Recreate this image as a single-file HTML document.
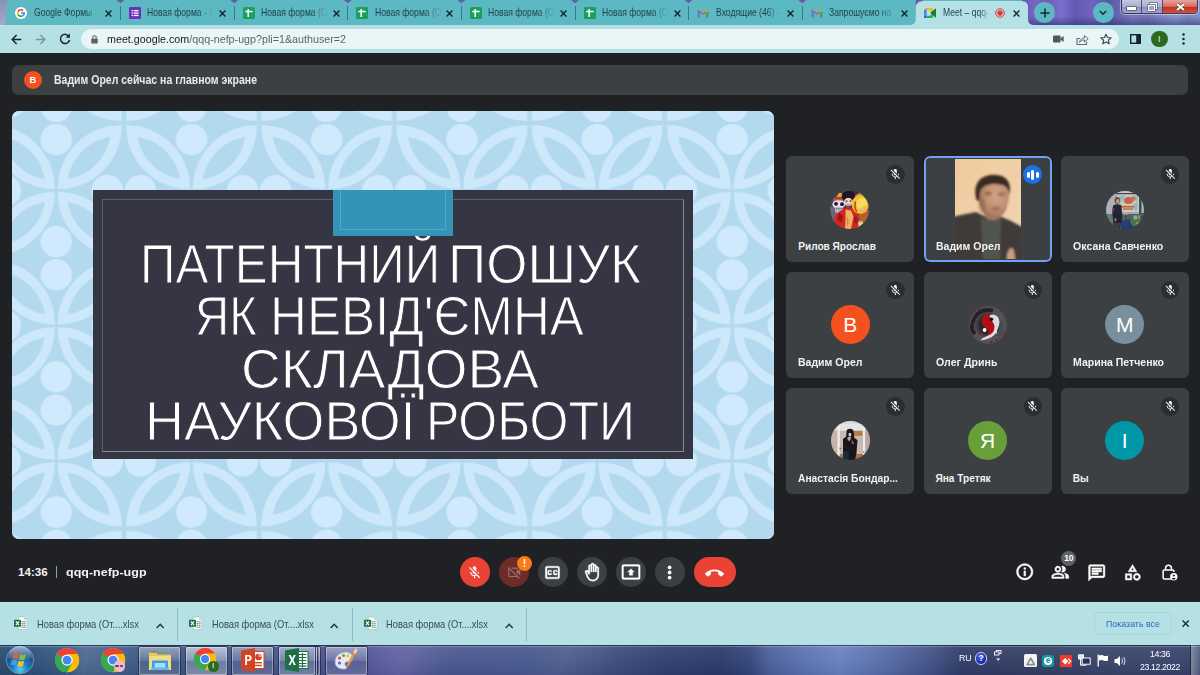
<!DOCTYPE html>
<html lang="ru">
<head>
<meta charset="utf-8">
<title>Meet – qqq-nefp-ugp</title>
<style>
*{box-sizing:border-box;margin:0;padding:0}
html,body{width:1200px;height:675px;overflow:hidden;background:#202124}
body{position:relative;font-family:"Liberation Sans",sans-serif;color:#e8eaed}
.abs{position:absolute}
svg{display:block;overflow:visible}
/* ---------- browser chrome ---------- */
#tabstrip{position:absolute;left:0;top:0;width:1200px;height:25px;background:#5cb8c2;overflow:hidden}
#frameL{position:absolute;left:0;top:0;width:8px;height:25px;background:linear-gradient(180deg,#8492b4,#9a9cc2 55%,#aaa8cc)}
#frameR{position:absolute;left:1022px;top:0;width:178px;height:25px;background:linear-gradient(180deg,rgba(40,40,100,0) 65%,rgba(40,40,100,.5) 100%),linear-gradient(90deg,#6658b4 0,#7668c4 8%,#6a5cb8 14%,#7a70cc 22%,#6458b0 30%,#7064bc 40%,#5a58a4 48%,#6a68b4 55%,#7878bc 62%,#6c74b4 70%,#8088c4 78%,#8c98cc 86%,#7c88c0 93%,#8890c8 100%)}
.tab{position:absolute;top:0;height:25px;width:114px}
.tab .ttl{position:absolute;left:27px;top:5.5px;font-size:10.6px;line-height:13px;color:#1d3f4a;white-space:nowrap;width:81.500px;overflow:hidden;transform:scaleX(.811);transform-origin:0 0;
 -webkit-mask-image:linear-gradient(90deg,#000 75%,transparent 100%);mask-image:linear-gradient(90deg,#000 75%,transparent 100%)}
.tab .fav{position:absolute;left:8.5px;top:6.9px;width:12px;height:12px}
.tab .cls{position:absolute;left:98.5px;top:9.5px;width:7px;height:7px}
.tab .sep{position:absolute;left:-0.5px;top:6px;width:1px;height:14px;background:#2f7f8a}
#toolbar{position:absolute;left:0;top:25px;width:1200px;height:28px;background:#b5e1e5}
#omni{position:absolute;left:81px;top:3.7px;width:1038px;height:20.6px;border-radius:10.3px;background:#e9f5f7}
#url{position:absolute;left:106.7px;top:6.3px;font-size:11.6px;line-height:15px;color:#202124;white-space:nowrap;transform:scaleX(.925);transform-origin:0 0}
#url span{color:#5f6368}
/* ---------- meet ---------- */
#meet{position:absolute;left:0;top:53px;width:1200px;height:549px;background:#202124}
#banner{position:absolute;left:12px;top:65.2px;width:1176px;height:29.8px;border-radius:7px;background:#3c4043}
#banner .av{position:absolute;left:11.8px;top:5.9px;width:18.2px;height:18.2px;border-radius:50%;background:#f4511e;color:#fff;font-size:9.5px;line-height:18.2px;text-align:center;font-weight:bold}
#banner .tx{position:absolute;left:42.4px;top:7.700px;transform:scaleX(.883);transform-origin:0 0;font-size:11.9px;line-height:14px;font-weight:bold;color:#e8eaed;white-space:nowrap}
#slide{position:absolute;left:12px;top:111px;width:762px;height:428px;border-radius:7px;overflow:hidden;background:#b3d9ef}
#box{position:absolute;left:81.2px;top:78.9px;width:599.7px;height:269.6px;background:#363543}
#boxin{position:absolute;left:90.4px;top:88.4px;width:582.1px;height:252.2px;border:1px solid;border-color:rgba(105,116,134,.7) rgba(140,148,163,.9) rgba(140,148,163,.9) rgba(105,116,134,.7)}
#accent{position:absolute;left:321.1px;top:78.8px;width:120px;height:45.8px;background:#3494b8}
#accent i{position:absolute;left:6.9px;top:0;width:106px;height:40px;border:1px solid rgba(130,200,225,.4);border-top:none}
.hl{position:absolute;white-space:nowrap;color:#fff;font-size:56px;line-height:60px;transform-origin:0 0;-webkit-text-stroke:1px #363543}
/* tiles */
.tile{position:absolute;width:128px;height:106.2px;border-radius:6px;background:#3c4043;overflow:hidden}
.tile .nm{position:absolute;left:12px;top:83.7px;font-size:10.1px;line-height:13px;font-weight:bold;color:#f1f3f4;white-space:nowrap}
.tile .mic{position:absolute;left:100px;top:9.1px;width:18.4px;height:18.4px;border-radius:50%;background:#2b2d30}
.tile .avt{position:absolute;left:44.5px;top:33.3px;width:39px;height:39px;border-radius:50%;overflow:hidden;color:#fff;text-align:center;font-size:21px;line-height:39px}
/* bottom bar */
.cbtn{position:absolute;top:557px;width:30px;height:30px;border-radius:50%;background:#3c4043}
/* downloads */
#dl{position:absolute;left:0;top:602px;width:1200px;height:43px;background:#b5e1e5}
.dli{position:absolute;top:0;height:43.5px;width:175px}
.dli .t{position:absolute;left:36.9px;top:15.5px;font-size:10.2px;line-height:13px;color:#3a4d54;white-space:nowrap;transform:scaleX(.916);transform-origin:0 0}
.dli .sp{position:absolute;left:177px;top:6.2px;width:1px;height:32.5px;background:#8fb9be}
/* taskbar */
#task{position:absolute;left:0;top:644.8px;width:1200px;height:30.2px;overflow:hidden;
 background:linear-gradient(90deg,#2a4a6e 0%,#2f5078 3%,#385a84 5.500%,#4d6a90 7%,#42618a 9.500%,#3a5682 12%,#3c5484 16%,#46548c 24%,#4c5290 30%,#56589c 33%,#4a5690 37%,#48588e 44%,#40507f 50%,#30406f 55%,#2a3a68 60%,#34447a 62.500%,#4a5e98 64%,#5a72b0 67%,#6880c0 70%,#5a70ac 73%,#46568c 77%,#303c68 80%,#333e62 86%,#384468 93%,#36426a 100%)}
#task:before{content:"";position:absolute;left:0;top:0;width:100%;height:100%;background:linear-gradient(180deg,rgba(20,30,60,.6) 0,rgba(20,30,60,.6) .8px,rgba(255,255,255,.3) 1px,rgba(255,255,255,.3) 1.8px,rgba(255,255,255,.07) 2.2px,rgba(255,255,255,.03) 50%,rgba(0,0,30,.06) 100%),linear-gradient(115deg,rgba(255,255,255,0) 30%,rgba(255,255,255,.07) 34%,rgba(255,255,255,0) 38%,rgba(255,255,255,0) 44%,rgba(255,255,255,.06) 47%,rgba(255,255,255,0) 51%)}
.tbtn{position:absolute;top:1px;height:30px;border:1px solid rgba(20,30,60,.75);border-radius:2px;background:linear-gradient(180deg,rgba(255,255,255,.42),rgba(255,255,255,.18) 48%,rgba(255,255,255,.06) 52%,rgba(255,255,255,.16));box-shadow:inset 0 0 0 1px rgba(255,255,255,.35)}
</style>
</head>
<body>
<div id="tabstrip">
 <div id="frameL"></div>
 <div id="frameR"></div>
 <!-- first tab rounded start -->
 <div class="abs" style="left:6px;top:0;width:12px;height:25px;background:#5cb8c2;border-top-left-radius:5px"></div><svg class="abs" style="left:0;top:0" width="8" height="25"><path d="M6.200 19.500V25H1.800Q6.200 25 6.200 19.500z" fill="#5cb8c2"/></svg>
 <!-- purple notches between tabs -->
 <svg class="abs" style="left:0;top:0" width="1200" height="25">
  <g fill="#6a5aa8">
   <path d="M116.4 0h8l-4 3.2z"/><path d="M230.2 0h8l-4 3.2z"/><path d="M343.8 0h8l-4 3.2z"/><path d="M457.4 0h8l-4 3.2z"/>
   <path d="M571 0h8l-4 3.2z"/><path d="M684.6 0h8l-4 3.2z"/><path d="M798.2 0h8l-4 3.2z"/>
  </g>
  <!-- active tab shape -->
  <path d="M909 25 Q915.8 25 915.8 19 V7.5 Q915.8 1 922.3 1 H1021.5 Q1028 1 1028 7.5 V19 Q1028 25 1034.5 25 Z" fill="#b5e1e5"/>
  <path d="M909 0 h14 v1 Q915.8 1 915.8 8 V0z" fill="#6a5aa8"/>
 </svg>
 <div class="tab" style="left:6.5px">
  <svg class="fav" viewBox="0 0 24 24"><circle cx="12" cy="12" r="12" fill="#fff"/>
   <path d="M12 10.4v3.3h4.6c-.2 1.1-.8 1.9-1.7 2.5l2.6 2c1.6-1.4 2.5-3.600 2.500-6.100 0-.6-.1-1.200-.2-1.700z" fill="#4285f4"/>
   <path d="M7.500 13.700l-.6.400-2.100 1.700C6.200 18.500 8.900 20.200 12 20.200c2.200 0 4-.7 5.400-2l-2.600-2c-.7.500-1.600.800-2.800.800-2.100 0-3.900-1.400-4.500-3.300z" fill="#34a853"/>
   <path d="M4.800 8.200C4.200 9.300 3.900 10.600 3.900 12s.300 2.700.9 3.800c0 0 2.700-2.100 2.700-2.100-.2-.5-.3-1.100-.3-1.700s.100-1.200.3-1.700z" fill="#fbbc05"/>
   <path d="M12 7.100c1.200 0 2.300.4 3.100 1.200l2.300-2.300C16 4.700 14.200 3.900 12 3.900c-3.100 0-5.800 1.800-7.200 4.400l2.700 2.100C8.100 8.500 9.900 7.100 12 7.100z" fill="#ea4335"/></svg>
  <div class="ttl">Google Формы - Google</div>
  <svg class="cls" viewBox="0 0 7 7"><path d="M.6.6l5.800 5.800M6.400.6L.6 6.400" stroke="#10262c" stroke-width="1.35" fill="none"/></svg>
 </div>
 <div class="tab" style="left:120.4px"><i class="sep"></i>
  <svg class="fav" viewBox="0 0 12 12"><rect width="12" height="12" rx="1.2" fill="#6b32b8"/><g fill="#fff"><rect x="2.600" y="3" width="1.300" height="1.300"/><rect x="4.700" y="3" width="4.800" height="1.300"/><rect x="2.600" y="5.400" width="1.300" height="1.300"/><rect x="4.700" y="5.400" width="4.800" height="1.300"/><rect x="2.600" y="7.800" width="1.300" height="1.300"/><rect x="4.700" y="7.800" width="4.800" height="1.300"/></g></svg>
  <div class="ttl">Новая форма - Google</div>
  <svg class="cls" viewBox="0 0 7 7"><path d="M.6.6l5.800 5.800M6.400.6L.6 6.400" stroke="#10262c" stroke-width="1.35" fill="none"/></svg>
 </div>
 <div class="tab" style="left:234.2px"><i class="sep"></i>
  <svg class="fav" viewBox="0 0 12 12"><rect width="12" height="12" rx="1.500" fill="#17a15a"/><path d="M2.300 4.600h7.400M5.200 2v8" stroke="#fff" stroke-width="1.500" fill="none"/></svg>
  <div class="ttl">Новая форма (Ответы)</div>
  <svg class="cls" viewBox="0 0 7 7"><path d="M.6.6l5.800 5.800M6.400.6L.6 6.400" stroke="#10262c" stroke-width="1.35" fill="none"/></svg>
 </div>
 <div class="tab" style="left:347.8px"><i class="sep"></i>
  <svg class="fav" viewBox="0 0 12 12"><rect width="12" height="12" rx="1.500" fill="#17a15a"/><path d="M2.300 4.600h7.400M5.200 2v8" stroke="#fff" stroke-width="1.500" fill="none"/></svg>
  <div class="ttl">Новая форма (Ответы)</div>
  <svg class="cls" viewBox="0 0 7 7"><path d="M.6.6l5.800 5.800M6.400.6L.6 6.400" stroke="#10262c" stroke-width="1.35" fill="none"/></svg>
 </div>
 <div class="tab" style="left:461.4px"><i class="sep"></i>
  <svg class="fav" viewBox="0 0 12 12"><rect width="12" height="12" rx="1.500" fill="#17a15a"/><path d="M2.300 4.600h7.400M5.200 2v8" stroke="#fff" stroke-width="1.500" fill="none"/></svg>
  <div class="ttl">Новая форма (Ответы)</div>
  <svg class="cls" viewBox="0 0 7 7"><path d="M.6.6l5.800 5.800M6.400.6L.6 6.400" stroke="#10262c" stroke-width="1.35" fill="none"/></svg>
 </div>
 <div class="tab" style="left:575px"><i class="sep"></i>
  <svg class="fav" viewBox="0 0 12 12"><rect width="12" height="12" rx="1.500" fill="#17a15a"/><path d="M2.300 4.600h7.400M5.200 2v8" stroke="#fff" stroke-width="1.500" fill="none"/></svg>
  <div class="ttl">Новая форма (Ответы)</div>
  <svg class="cls" viewBox="0 0 7 7"><path d="M.6.6l5.800 5.800M6.400.6L.6 6.400" stroke="#10262c" stroke-width="1.35" fill="none"/></svg>
 </div>
 <div class="tab" style="left:688.6px"><i class="sep"></i>
  <svg class="fav" viewBox="0 0 12 12"><path d="M.8 2.600v7.600h2.200V5.500L6 7.800l3-2.300v4.700h2.200V2.600L6 6.400z" fill="#ea4335"/><path d="M.8 10.200h2.200V5.500L.8 3.800z" fill="#4285f4"/><path d="M11.200 10.200H9V5.500l2.200-1.700z" fill="#34a853"/><path d="M9 5.500l2.200-1.700V2.600L9 3.900z" fill="#fbbc05"/></svg>
  <div class="ttl">Входящие (46) -</div>
  <svg class="cls" viewBox="0 0 7 7"><path d="M.6.6l5.800 5.800M6.400.6L.6 6.400" stroke="#10262c" stroke-width="1.35" fill="none"/></svg>
 </div>
 <div class="tab" style="left:802.2px"><i class="sep"></i>
  <svg class="fav" viewBox="0 0 12 12"><path d="M.8 2.600v7.600h2.200V5.500L6 7.800l3-2.300v4.700h2.200V2.600L6 6.400z" fill="#ea4335"/><path d="M.8 10.200h2.200V5.500L.8 3.800z" fill="#4285f4"/><path d="M11.200 10.200H9V5.500l2.200-1.700z" fill="#34a853"/><path d="M9 5.500l2.200-1.700V2.600L9 3.900z" fill="#fbbc05"/></svg>
  <div class="ttl">Запрошуємо на</div>
  <svg class="cls" viewBox="0 0 7 7"><path d="M.6.6l5.800 5.800M6.400.6L.6 6.400" stroke="#10262c" stroke-width="1.35" fill="none"/></svg>
 </div>
 <div class="tab" style="left:915.8px">
  <svg class="fav" viewBox="0 0 12 12"><path d="M0 3.200L2.700.9v2.300z" fill="#ea4335"/><path d="M2.700.9H8q.9 0 .9.900v1.900L6.800 5.200V3.200H2.700z" fill="#fbbc05"/><path d="M0 3.200h2.700v5.600H0z" fill="#4285f4"/><path d="M0 8.800h2.700v2.300H.9q-.9 0-.9-.9z" fill="#1967d2"/><path d="M2.700 8.800h4.100V6.800l2.100 1.700v1.700q0 .9-.9.900H2.700z" fill="#34a853"/><path d="M6.800 5.200L11.300 1.700q.7-.4.700.4v7.800q0 .8-.7.400L6.800 6.800z" fill="#188038"/></svg>
  <div class="ttl" style="width:59px">Meet – qqq-</div>
  <svg class="abs" style="left:78.8px;top:8px" width="10" height="10" viewBox="0 0 10 10"><circle cx="5" cy="5" r="4.300" fill="none" stroke="#e53935" stroke-width="1"/><circle cx="5" cy="5" r="2.700" fill="#e53935"/></svg>
  <svg class="cls" style="left:97px" viewBox="0 0 7 7"><path d="M.6.6l5.800 5.800M6.400.6L.6 6.400" stroke="#10262c" stroke-width="1.35" fill="none"/></svg>
 </div>
 <!-- new tab + tab search -->
 <div class="abs" style="left:1034.2px;top:2.4px;width:20.600px;height:20.600px;border-radius:50%;background:#5cb8c2"></div>
 <svg class="abs" style="left:1039.500px;top:7.700px" width="10" height="10" viewBox="0 0 10 10"><path d="M5 .5v9M.5 5h9" stroke="#0f2a30" stroke-width="1.500"/></svg>
 <div class="abs" style="left:1093.100px;top:2.4px;width:20.600px;height:20.600px;border-radius:50%;background:#5cb8c2"></div>
 <svg class="abs" style="left:1099.400px;top:9.500px" width="8" height="6" viewBox="0 0 8 6"><path d="M.8 1l3.200 3.200L7.200 1" stroke="#0f2a30" stroke-width="1.400" fill="none"/></svg>
 <!-- window controls -->
 <div class="abs" style="left:1120.800px;top:-1px;width:77px;height:14.500px;border:1px solid rgba(40,40,70,.8);border-radius:0 0 4px 4px;overflow:hidden;box-shadow:0 0 0 1px rgba(255,255,255,.45)">
  <div class="abs" style="left:0;top:0;width:20px;height:14px;background:linear-gradient(180deg,#c5c6e0,#a9abd2 50%,#8d90c0 52%,#a6a8d4);border-right:1px solid rgba(40,40,70,.7)"></div>
  <div class="abs" style="left:20px;top:0;width:21px;height:14px;background:linear-gradient(180deg,#c5c6e0,#a9abd2 50%,#8d90c0 52%,#a6a8d4);border-right:1px solid rgba(40,40,70,.7)"></div>
  <div class="abs" style="left:41px;top:0;width:36px;height:14px;background:linear-gradient(180deg,#e8a59b,#d9675a 48%,#c2301f 52%,#d8563e)"></div>
  <div class="abs" style="left:5.500px;top:7px;width:9px;height:3px;background:#fff;box-shadow:0 0 0 .6px #444"></div>
  <div class="abs" style="left:28.500px;top:2.500px;width:7px;height:6px;border:1.300px solid #fff;box-shadow:0 0 0 .6px #555"></div>
  <div class="abs" style="left:26px;top:4.700px;width:7px;height:6px;border:1.300px solid #fff;background:#9fa2cc;box-shadow:0 0 0 .6px #555"></div>
  <svg class="abs" style="left:54px;top:2.800px" width="9" height="8" viewBox="0 0 9 8"><path d="M1 1l7 6M8 1L1 7" stroke="#444" stroke-width="3"/><path d="M1 1l7 6M8 1L1 7" stroke="#fff" stroke-width="1.900"/></svg>
 </div>
</div>

<div id="toolbar">
 <div id="omni"></div>
 <!-- back / forward / reload -->
 <svg class="abs" style="left:10.800px;top:8.500px" width="11" height="11" viewBox="0 0 11 11"><path d="M10.300 5.500H1.600M5.600 1L1.200 5.500l4.400 4.500" stroke="#16282d" stroke-width="1.500" fill="none"/></svg>
 <svg class="abs" style="left:34.800px;top:8.500px" width="11" height="11" viewBox="0 0 11 11"><path d="M.7 5.500h8.700M5.400 1l4.400 4.500L5.400 10" stroke="#7b979d" stroke-width="1.500" fill="none"/></svg>
 <svg class="abs" style="left:58.700px;top:7.700px" width="12" height="12" viewBox="0 0 12 12"><path d="M10 3.500A4.600 4.600 0 1 0 10.600 7" stroke="#16282d" stroke-width="1.500" fill="none"/><path d="M10.900.6v4.200H6.700z" fill="#16282d"/></svg>
 <!-- lock -->
 <svg class="abs" style="left:90.900px;top:9.800px" width="7" height="8.750" viewBox="0 0 8 10"><rect x=".3" y="4" width="7.400" height="5.700" rx=".8" fill="#5f6368"/><path d="M2 4V2.800a2 2 0 0 1 4 0V4" stroke="#5f6368" stroke-width="1.200" fill="none"/></svg>
 <div id="url">meet.google.com<span>/qqq-nefp-ugp?pli=1&amp;authuser=2</span></div>
 <!-- camera, share, star -->
 <svg class="abs" style="left:1052.500px;top:10px" width="11" height="8" viewBox="0 0 11 8"><rect x="0" y=".5" width="7.600" height="7" rx="1" fill="#50585c"/><path d="M7.600 3.200L10.600 1v6L7.600 4.800z" fill="#50585c"/></svg>
 <svg class="abs" style="left:1076px;top:8.500px" width="13" height="11" viewBox="0 0 13 11"><path d="M4 4.500H1v6h9.500V8" stroke="#5f6b70" stroke-width="1.100" fill="none"/><path d="M3.500 8.500C4 5.500 6 4 8.500 3.800V1.500l3.700 3.300-3.700 3.300V5.900C6.500 5.900 4.800 6.600 3.500 8.500z" stroke="#5f6b70" stroke-width="1" fill="none"/></svg>
 <svg class="abs" style="left:1100px;top:8.200px" width="12" height="12" viewBox="0 0 12 12"><path d="M6 1.200l1.500 3.300 3.600.4-2.700 2.400.8 3.500L6 9l-3.200 1.800.8-3.500L.9 4.900l3.600-.4z" stroke="#39464b" stroke-width="1.150" fill="none" stroke-linejoin="round"/></svg>
 <!-- side panel, avatar, menu -->
 <svg class="abs" style="left:1130px;top:9px" width="11" height="10" viewBox="0 0 11 10"><rect x=".7" y=".7" width="9.600" height="8.600" fill="none" stroke="#14262b" stroke-width="1.400"/><rect x="6.200" y=".7" width="4.100" height="8.600" fill="#14262b"/></svg>
 <div class="abs" style="left:1151px;top:5.700px;width:16.600px;height:16.600px;border-radius:50%;background:#2b6a1c;color:#e6f2e2;font-size:9px;line-height:16.600px;text-align:center">I</div>
 <svg class="abs" style="left:1182.300px;top:8.300px" width="3" height="12" viewBox="0 0 3 12"><circle cx="1.500" cy="1.500" r="1.250" fill="#14262b"/><circle cx="1.500" cy="6" r="1.250" fill="#14262b"/><circle cx="1.500" cy="10.500" r="1.250" fill="#14262b"/></svg>
</div>

<div id="meet"></div>
<div id="banner"><div class="av">В</div><div class="tx">Вадим Орел сейчас на главном экране</div></div>
<div id="slide">
<svg class="abs" style="left:0;top:0" width="762" height="428">
 <defs><pattern id="pt" patternUnits="userSpaceOnUse" x="-23.30" y="12.00" width="135.2" height="135.2">
  <rect width="135.2" height="135.2" fill="#b3d9ef"/>
  <path d="M66.20 66.20A63.39 63.39 0 0 1 2.20 2.20A63.39 63.39 0 0 1 66.20 66.20Z M69.00 66.20A63.39 63.39 0 0 1 133.00 2.20A63.39 63.39 0 0 1 69.00 66.20Z M69.00 69.00A63.39 63.39 0 0 1 133.00 133.00A63.39 63.39 0 0 1 69.00 69.00Z M66.20 69.00A63.39 63.39 0 0 1 2.20 133.00A63.39 63.39 0 0 1 66.20 69.00Z" fill="#cde8fb"/>
  <path d="M56.20 56.20A51.19 51.19 0 0 1 13.60 13.60A51.19 51.19 0 0 1 56.20 56.20Z M79.00 56.20A51.19 51.19 0 0 1 121.60 13.60A51.19 51.19 0 0 1 79.00 56.20Z M79.00 79.00A51.19 51.19 0 0 1 121.60 121.60A51.19 51.19 0 0 1 79.00 79.00Z M56.20 79.00A51.19 51.19 0 0 1 13.60 121.60A51.19 51.19 0 0 1 56.20 79.00Z" fill="#b3d9ef"/>
  <circle cx="118.60" cy="67.60" r="15.7" fill="#d0e9fc"/><circle cx="16.60" cy="67.60" r="15.7" fill="#d0e9fc"/><circle cx="67.60" cy="118.60" r="15.7" fill="#d0e9fc"/><circle cx="67.60" cy="16.60" r="15.7" fill="#d0e9fc"/>
 </pattern></defs>
 <rect width="762" height="428" fill="url(#pt)"/>
</svg>
 <div id="box"></div><div id="boxin"></div>
 <div class="hl" style="left:127.99px;top:122.6px;transform:scaleX(0.8818)">ПАТЕНТНИЙ</div>
 <div class="hl" style="left:436.06px;top:122.6px;transform:scaleX(0.9485)">ПОШУК</div>
 <div class="hl" style="left:183.32px;top:175.2px;transform:scaleX(0.8448)">ЯК</div>
 <div class="hl" style="left:257.74px;top:175.2px;transform:scaleX(0.9124)">НЕВІД'ЄМНА</div>
 <div class="hl" style="left:229.05px;top:227.6px;transform:scaleX(0.9823)">СКЛАДОВА</div>
 <div class="hl" style="left:133.19px;top:280.0px;transform:scaleX(0.9625)">НАУКОВОЇ</div>
 <div class="hl" style="left:414.23px;top:280.0px;transform:scaleX(0.8942)">РОБОТИ</div>
 <div id="accent"><i></i></div>
</div>
<div class="tile" style="left:786.2px;top:156.2px"><div class="mic"><svg class="abs" style="left:2.9px;top:3.1px" width="12.600" height="12.600" viewBox="0 0 24 24"><path d="M19 11h-1.7c0 .74-.16 1.43-.43 2.050l1.230 1.230c.56-.98.9-2.090.9-3.280zm-4.020.17c0-.06.020-.11.020-.17V5c0-1.660-1.340-3-3-3S9 3.340 9 5v.18l5.980 5.990zM4.270 3L3 4.270l6.010 6.010V11c0 1.660 1.330 3 2.990 3 .22 0 .44-.03.65-.08l1.660 1.660c-.71.33-1.500.52-2.310.52-2.760 0-5.300-2.100-5.300-5.100H5c0 3.410 2.720 6.230 6 6.720V21h2v-3.280c.91-.13 1.770-.45 2.540-.9L19.730 21 21 19.730 4.270 3z" fill="#f1f3f4"/></svg></div><svg class="abs" style="left:44.300px;top:34.100px" width="39" height="39" viewBox="0 0 39 39"><defs><filter id="avb" x="-5%" y="-5%" width="110%" height="110%"><feGaussianBlur stdDeviation=".55"/></filter><clipPath id="c1"><circle cx="19.500" cy="19.500" r="19.500"/></clipPath></defs><g clip-path="url(#c1)"><g filter="url(#avb)">
<rect x="-3" y="-3" width="45" height="45" fill="#4e4264"/>
<ellipse cx="30" cy="6" rx="12" ry="8" fill="#c8843a"/><ellipse cx="24" cy="2" rx="5" ry="3" fill="#3a2c40"/>
<ellipse cx="34" cy="30" rx="9" ry="11" fill="#b8602c"/>
<ellipse cx="17" cy="38" rx="14" ry="5.500" fill="#e8b428"/>
<path d="M0 17h8v14l-5 3z" fill="#6e687c"/>
<ellipse cx="8.700" cy="14.200" rx="6.300" ry="4.500" fill="#e4e0e8"/><rect x="5.200" y="17" width="7.500" height="5.500" rx="1.500" fill="#cfcbd6"/>
<path d="M5.500 18.500h7M6.800 17.500v4M9 17.500v4M11.200 17.500v4" stroke="#5a4a6a" stroke-width=".5"/>
<circle cx="6" cy="13.800" r="1.900" fill="#1c1046"/><circle cx="12" cy="14.200" r="1.900" fill="#1c1046"/>
<rect x="3" y="7.300" width="9.500" height="2.600" rx=".6" fill="#c8343a"/><rect x="3" y="9.600" width="9.500" height=".9" fill="#b89048"/><path d="M6.500 7L9 2.800l3.500.8-1 3.400z" fill="#e6a82c"/>
<path d="M7 39L3.500 28l6.500-7 8.500-4.500 10 6 1.500 10-3.500 6.500z" fill="#d6261c"/>
<path d="M9 22.500l4 4-1.500 6-4.500-3z" fill="#9c1814"/><path d="M24 25l4 3-1 6-3-2z" fill="#a81c18"/>
<path d="M15.500 19.500l5.500 1 2.500 6-2.500 12.500h-6l.5-10z" fill="#f0b468"/><path d="M17.500 27v10M16 30h4M16 33h4" stroke="#c8823c" stroke-width=".6"/>
<ellipse cx="18.500" cy="6" rx="6.800" ry="5" fill="#1e1428"/>
<ellipse cx="18.300" cy="11.800" rx="4.300" ry="4" fill="#f6d2a6"/>
<path d="M13.300 10q5-4.500 10.400-.5l-.3-4h-9.800z" fill="#1e1428"/>
<circle cx="16.500" cy="11.300" r="1" fill="#3c5ac0"/><circle cx="20.600" cy="10.900" r="1" fill="#3c5ac0"/><path d="M16.500 14q2 1.300 4-.2" stroke="#8a4a3a" stroke-width=".5" fill="none"/>
<ellipse cx="30.300" cy="14.500" rx="8.600" ry="9.400" fill="#eec232"/>
<ellipse cx="31.800" cy="14" rx="5.300" ry="6.200" fill="#f6dc58"/>
<path d="M25.600 11.500q-1.800 5.500 1.200 10.500" stroke="#c8342a" stroke-width="1.400" fill="none"/>
<path d="M30 19l5-3.500 1.500 3.500-4 3.500z" fill="#e4a25c"/><path d="M31 19.500l4-2.500M31.800 21l4-2.500" stroke="#fff" stroke-width=".5"/>
<circle cx="30.500" cy="33.500" r="2.400" fill="#e6d8b0"/><circle cx="30.500" cy="32.200" r="1.400" fill="#e6c030"/><rect x="28" y="29" width="2.500" height="2" fill="#3a6ac8"/>
</g></g></svg><div class="nm">Рилов Ярослав</div></div>
<div class="tile" style="left:923.5px;top:156.2px"><svg class="abs" style="left:31.100px;top:2.900px;overflow:hidden" width="66.300" height="99.700" viewBox="0 0 66.300 99.700"><defs>
<linearGradient id="vb" x1="0" y1="0" x2="1" y2="1"><stop offset="0" stop-color="#efca9e"/><stop offset=".45" stop-color="#f1cfa6"/><stop offset="1" stop-color="#eed3b4"/></linearGradient>
<radialGradient id="vf" cx=".58" cy=".42" r=".62"><stop offset="0" stop-color="#d6a587"/><stop offset=".6" stop-color="#bf8f72"/><stop offset="1" stop-color="#96694f"/></radialGradient>
<filter id="bl" x="-10%" y="-10%" width="120%" height="120%"><feGaussianBlur stdDeviation="1.300"/></filter>
<filter id="bl2" x="-30%" y="-30%" width="160%" height="160%"><feGaussianBlur stdDeviation="1.800"/></filter></defs>
<rect width="66.300" height="99.700" fill="url(#vb)"/>
<g filter="url(#bl)">
<path d="M-9 59.500q14-3.500 30-6.500l8 4 18 1q14 5.500 28 15V112H-9z" fill="#3f3b38"/>
<path d="M26 58q9.500 6 20 1l-1 54H28z" fill="#51554d"/>
<path d="M27 52l4 7q7 4 14 0l2-8z" fill="#b3846a"/>
<path d="M23 36q-1-12 8-15 10-2.500 18 1 6 3 5.500 12-.5 9-3 15.500-3 8-10 10-8 1-12.500-5.500-5-7-6-18z" fill="url(#vf)"/>
<path d="M21 40q-3-14 5-20.500 8-5.500 19-3 7.500 2 9.500 9 1 4 .2 9.500-2-6.500-6-8.500-9-2.500-16-.5-5.500 1.500-7.500 6-1 4.500-.5 9.500-1.500 1.500-3.700-1.500z" fill="#3a2b23"/>
<path d="M52 96q1.500-7.500 5-7 3.500 1 3.500 22h-10z" fill="#c99c80"/>
</g>
<g filter="url(#bl2)" opacity=".55"><ellipse cx="33" cy="34.500" rx="4" ry="1.700" fill="#5a3c30"/><ellipse cx="46.500" cy="35.200" rx="4" ry="1.700" fill="#5a3c30"/><ellipse cx="40.500" cy="49.800" rx="4.500" ry="1.800" fill="#7a4a40"/><ellipse cx="27" cy="46" rx="3" ry="8" fill="#8a6450"/></g>
</svg><div class="abs" style="left:99.400px;top:8.700px;width:19.600px;height:19.600px;border-radius:50%;background:#1c71e4"></div>
<div class="abs" style="left:103.350px;top:16.200px;width:2.900px;height:5.200px;border-radius:1.450px;background:#fff"></div>
<div class="abs" style="left:107.750px;top:13.400px;width:2.900px;height:10.200px;border-radius:1.450px;background:#fff"></div>
<div class="abs" style="left:112.450px;top:16.200px;width:2.900px;height:5.200px;border-radius:1.450px;background:#fff"></div><div class="abs" style="left:0;top:0;width:128px;height:106.200px;border:2.600px solid #6ea3f7;border-radius:6px"></div><div class="nm" style="transform:scaleX(1.042);transform-origin:0 0">Вадим Орел</div></div>
<div class="tile" style="left:1060.7px;top:156.2px"><div class="mic"><svg class="abs" style="left:2.9px;top:3.1px" width="12.600" height="12.600" viewBox="0 0 24 24"><path d="M19 11h-1.7c0 .74-.16 1.43-.43 2.050l1.230 1.230c.56-.98.9-2.090.9-3.280zm-4.020.17c0-.06.020-.11.020-.17V5c0-1.660-1.340-3-3-3S9 3.340 9 5v.18l5.980 5.990zM4.270 3L3 4.270l6.010 6.010V11c0 1.660 1.330 3 2.990 3 .22 0 .44-.03.65-.08l1.660 1.660c-.71.33-1.500.52-2.310.52-2.760 0-5.300-2.100-5.300-5.100H5c0 3.410 2.720 6.230 6 6.720V21h2v-3.280c.91-.13 1.770-.45 2.540-.9L19.730 21 21 19.730 4.270 3z" fill="#f1f3f4"/></svg></div><svg class="abs" style="left:45.200px;top:34.500px" width="38" height="38" viewBox="0 0 38 38"><defs><clipPath id="c2"><circle cx="19" cy="19" r="19"/></clipPath></defs><g clip-path="url(#c2)"><g filter="url(#avb)">
<rect width="38" height="38" fill="#b9bec4"/>
<rect x="0" y="0" width="38" height="3.500" fill="#e4e6e8"/>
<rect x="0" y="3" width="9" height="20" fill="#c6cacf"/>
<rect x="10" y="2" width="26" height="1.200" fill="#4a3c38"/>
<rect x="33" y="6" width="5" height="19" fill="#2f5648"/><rect x="35.500" y="8" width="2.500" height="14" fill="#c8ccd0"/>
<rect x="11.500" y="3.800" width="21.500" height="17.200" fill="#e9eaef"/>
<rect x="13" y="4.800" width="18.500" height="14.600" fill="#efe6a4"/>
<path d="M13 4.800h6l-2 4-4 5z" fill="#a8c8ee"/><path d="M26 4.800h5.500v7l-2-3z" fill="#b6d49a"/><path d="M27 13l4.500-1v7.400h-3z" fill="#a8c8ee"/>
<ellipse cx="22.500" cy="9.500" rx="4.600" ry="3.600" fill="#e2626a"/><ellipse cx="27" cy="7.800" rx="2.600" ry="2.200" fill="#e67a74"/>
<rect x="15.500" y="15" width="12.500" height="1.500" fill="#d65a4c"/><rect x="17" y="17.300" width="10" height="1.400" fill="#dc6a52"/>
<rect x="0" y="23" width="38" height="15" fill="#5c8a6c"/>
<rect x="0" y="23" width="8" height="9" fill="#86a890"/>
<path d="M15 30l8-2 3 4-2 6h-9z" fill="#2444a4"/><rect x="22" y="31" width="6" height="7" fill="#1c3a94"/>
<ellipse cx="19.500" cy="22.800" rx="2.800" ry="1.800" fill="#d8b4b4"/><rect x="19" y="24" width="1.200" height="6" fill="#5a4a30"/>
<rect x="27.500" y="24.500" width="3.600" height="4.200" fill="#ecebea"/><rect x="31.500" y="24.500" width="3" height="4" fill="#e0c682"/>
<path d="M24 30l9-2.500 3 1.500-2 4.500-8 1.500z" fill="#54a854"/><rect x="30" y="31" width="3.500" height="2.500" fill="#e6c428"/><rect x="34.500" y="25" width="3" height="3" fill="#2c54b8"/>
<ellipse cx="11.300" cy="9.500" rx="2.700" ry="3.400" fill="#76492e"/><ellipse cx="11.700" cy="10.300" rx="1.700" ry="2.200" fill="#dca88c"/>
<path d="M7 14.500q4.500-2.500 8.500 0l.8 11-1 7.500H7.500L6.300 22z" fill="#1b1b2f"/>
<rect x="6.300" y="17" width="2" height="3" fill="#7a3850"/><path d="M7 32h8.500l-.5 3.500H7.500z" fill="#5a3a58"/>
<rect x="8.500" y="27" width="1.800" height="3.500" rx=".8" fill="#d8a488"/>
<rect x="9" y="35" width="2" height="3" fill="#3a2c2c"/><rect x="12" y="35" width="2" height="3" fill="#3a2c2c"/><rect width="38" height="38" fill="#4a4e58" opacity=".2"/><rect y="23" width="38" height="15" fill="#20242c" opacity=".25"/>
</g></g></svg><div class="nm" style="transform:scaleX(1.048);transform-origin:0 0">Оксана Савченко</div></div>
<div class="tile" style="left:786.2px;top:271.9px"><div class="mic"><svg class="abs" style="left:2.9px;top:3.1px" width="12.600" height="12.600" viewBox="0 0 24 24"><path d="M19 11h-1.7c0 .74-.16 1.43-.43 2.050l1.230 1.230c.56-.98.9-2.090.9-3.280zm-4.020.17c0-.06.020-.11.020-.17V5c0-1.660-1.340-3-3-3S9 3.340 9 5v.18l5.980 5.990zM4.270 3L3 4.270l6.010 6.010V11c0 1.660 1.330 3 2.990 3 .22 0 .44-.03.65-.08l1.660 1.660c-.71.33-1.500.52-2.310.52-2.760 0-5.300-2.100-5.300-5.100H5c0 3.410 2.720 6.230 6 6.720V21h2v-3.280c.91-.13 1.770-.45 2.540-.9L19.730 21 21 19.730 4.270 3z" fill="#f1f3f4"/></svg></div><div class="avt" style="background:#f4511e;top:33.3px">В</div><div class="nm" style="transform:scaleX(1.042);transform-origin:0 0">Вадим Орел</div></div>
<div class="tile" style="left:923.5px;top:271.9px"><div class="mic"><svg class="abs" style="left:2.9px;top:3.1px" width="12.600" height="12.600" viewBox="0 0 24 24"><path d="M19 11h-1.7c0 .74-.16 1.43-.43 2.050l1.230 1.230c.56-.98.9-2.090.9-3.280zm-4.020.17c0-.06.020-.11.020-.17V5c0-1.660-1.340-3-3-3S9 3.340 9 5v.18l5.980 5.990zM4.270 3L3 4.270l6.010 6.010V11c0 1.660 1.330 3 2.990 3 .22 0 .44-.03.65-.08l1.660 1.660c-.71.33-1.500.52-2.310.52-2.760 0-5.300-2.100-5.300-5.100H5c0 3.410 2.720 6.230 6 6.720V21h2v-3.280c.91-.13 1.770-.45 2.540-.9L19.730 21 21 19.730 4.270 3z" fill="#f1f3f4"/></svg></div><svg class="abs" style="left:45px;top:34.300px" width="38" height="38" viewBox="0 0 38 38"><defs><clipPath id="c3"><circle cx="19" cy="19" r="19"/></clipPath><radialGradient id="g3" cx=".5" cy=".5" r=".5"><stop offset="0" stop-color="#1c1c1e"/><stop offset=".45" stop-color="#2a2a2c"/><stop offset=".75" stop-color="#565658"/><stop offset="1" stop-color="#4e4e50"/></radialGradient></defs><g clip-path="url(#c3)"><g filter="url(#avb)">
<rect width="38" height="38" fill="url(#g3)"/>
<path d="M24 4.500Q11 2 5.500 12T6 28" stroke="#1a1a1c" stroke-width="3.800" fill="none" opacity=".85"/><path d="M33 15q2 9-4 16" stroke="#4c4c4e" stroke-width="2.500" fill="none"/>
<path d="M21 7.500c-7 .5-10 6-7.500 11 2 3.500 5.500 4 6 8 .3 2.500-2.500 4.500-6 4 4 2.500 9.500 1.500 12-2.500 3-5 1-9-1.500-12.500-1.500-2.500-2-5.500-3-8z" fill="#b40f18"/>
<path d="M20.500 9.500c3-2 7.500-1 9 2.500 2 4.500.5 8-1 11.500-1 3-2.500 6-6.500 8-3.500 1.500-7 2.500-10.500 3 1-2 4-3.500 7.500-5 4-1.500 6.500-4 6.500-8.500 0-4-3.500-6-5-11.500z" fill="#dcdcde"/>
<path d="M26 22l2.500 6-3-2z" fill="#e8e8ea"/>
<circle cx="22.500" cy="13.300" r="1.700" fill="#0a0a0c"/>
<circle cx="15.600" cy="24" r="1.900" fill="#fff"/>
<g fill="#8c1018"><circle cx="4.500" cy="10.500" r="1"/><circle cx="2.500" cy="17.500" r="1.100"/><circle cx="4.800" cy="21.800" r="1"/><circle cx="10" cy="3.500" r=".9"/><circle cx="15.500" cy="2" r=".9"/><circle cx="22" cy="36" r="1"/><circle cx="27.500" cy="34" r=".9"/><circle cx="35" cy="28" r=".9"/><circle cx="10" cy="27.500" r="1"/></g>
</g></g></svg><div class="nm" style="transform:scaleX(1.05);transform-origin:0 0">Олег Дринь</div></div>
<div class="tile" style="left:1060.7px;top:271.9px"><div class="mic"><svg class="abs" style="left:2.9px;top:3.1px" width="12.600" height="12.600" viewBox="0 0 24 24"><path d="M19 11h-1.7c0 .74-.16 1.43-.43 2.050l1.230 1.230c.56-.98.9-2.090.9-3.280zm-4.020.17c0-.06.020-.11.020-.17V5c0-1.660-1.340-3-3-3S9 3.340 9 5v.18l5.980 5.990zM4.270 3L3 4.270l6.010 6.010V11c0 1.660 1.330 3 2.990 3 .22 0 .44-.03.65-.08l1.660 1.660c-.71.33-1.500.52-2.310.52-2.760 0-5.300-2.100-5.300-5.100H5c0 3.410 2.720 6.230 6 6.720V21h2v-3.280c.91-.13 1.770-.45 2.540-.9L19.730 21 21 19.730 4.270 3z" fill="#f1f3f4"/></svg></div><div class="avt" style="background:#78909c;top:33.3px">М</div><div class="nm" style="transform:scaleX(1.042);transform-origin:0 0">Марина Петченко</div></div>
<div class="tile" style="left:786.2px;top:388.2px"><div class="mic"><svg class="abs" style="left:2.9px;top:3.1px" width="12.600" height="12.600" viewBox="0 0 24 24"><path d="M19 11h-1.7c0 .74-.16 1.43-.43 2.050l1.230 1.230c.56-.98.9-2.090.9-3.280zm-4.020.17c0-.06.020-.11.020-.17V5c0-1.660-1.340-3-3-3S9 3.340 9 5v.18l5.980 5.990zM4.270 3L3 4.270l6.010 6.010V11c0 1.660 1.330 3 2.990 3 .22 0 .44-.03.65-.08l1.660 1.660c-.71.33-1.500.52-2.310.52-2.760 0-5.300-2.100-5.300-5.100H5c0 3.410 2.720 6.230 6 6.720V21h2v-3.280c.91-.13 1.770-.45 2.540-.9L19.730 21 21 19.730 4.270 3z" fill="#f1f3f4"/></svg></div><svg class="abs" style="left:44.500px;top:33.100px" width="39" height="39" viewBox="0 0 39 39"><defs><clipPath id="c4"><circle cx="19.500" cy="19.500" r="19.500"/></clipPath></defs><g clip-path="url(#c4)"><g filter="url(#avb)">
<rect width="39" height="39" fill="#c9b2aa"/>
<rect x="0" y="0" width="39" height="9.500" fill="#d9dcdb"/>
<rect x="8" y="3" width="25" height="7" fill="#e3e5e4"/>
<rect x="6.500" y="4" width="2.300" height="32" fill="#eceeed"/><rect x="32" y="5" width="2.300" height="31" fill="#eceeed"/>
<rect x="34.300" y="8" width="4.700" height="28" fill="#bfa69e"/>
<rect x="9" y="9.800" width="23" height="23" fill="#cdb9b3"/>
<rect x="23" y="9.800" width="8.400" height="5" fill="#b47e42"/>
<rect x="8.800" y="33" width="23.200" height="3" fill="#ae763e"/><rect x="0" y="36" width="39" height="3" fill="#8a6a52"/>
<circle cx="9.300" cy="27.500" r=".9" fill="#7a6a5a"/><circle cx="32.800" cy="31" r=".8" fill="#6a5a4a"/>
<path d="M15.500 10.500q0-2.800 3.500-2.800t3.700 2.800l.8 9h-8.600z" fill="#1c181f"/>
<rect x="17.600" y="12" width="2.600" height="3.600" rx=".5" fill="#c9c9d1"/>
<path d="M12 18q3-3.500 7.500-2.500t7 3.500l-1 13-1.500 7H12.500l-.5-8z" fill="#17171f"/>
<path d="M12.300 30h5.500l-.3 9h-5.200z" fill="#1c2a44"/>
<path d="M16 17.500q1.500-2.500 3.200-2l1 1.700-2 3.300z" fill="#c9a08c"/><path d="M21 19l2 3.500-1 1-1.500-2.500z" fill="#a07868"/>
</g></g></svg><div class="nm" style="transform:scaleX(1.016);transform-origin:0 0">Анастасія Бондар...</div></div>
<div class="tile" style="left:923.5px;top:388.2px"><div class="mic"><svg class="abs" style="left:2.9px;top:3.1px" width="12.600" height="12.600" viewBox="0 0 24 24"><path d="M19 11h-1.7c0 .74-.16 1.43-.43 2.050l1.230 1.230c.56-.98.9-2.090.9-3.280zm-4.020.17c0-.06.020-.11.020-.17V5c0-1.660-1.340-3-3-3S9 3.340 9 5v.18l5.980 5.990zM4.270 3L3 4.270l6.010 6.010V11c0 1.660 1.330 3 2.990 3 .22 0 .44-.03.65-.08l1.660 1.660c-.71.33-1.500.52-2.310.52-2.760 0-5.300-2.100-5.300-5.100H5c0 3.410 2.720 6.230 6 6.720V21h2v-3.280c.91-.13 1.770-.45 2.540-.9L19.730 21 21 19.730 4.270 3z" fill="#f1f3f4"/></svg></div><div class="avt" style="background:#689f38;top:32.8px">Я</div><div class="nm">Яна Третяк</div></div>
<div class="tile" style="left:1060.7px;top:388.2px"><div class="mic"><svg class="abs" style="left:2.9px;top:3.1px" width="12.600" height="12.600" viewBox="0 0 24 24"><path d="M19 11h-1.7c0 .74-.16 1.43-.43 2.050l1.230 1.230c.56-.98.9-2.090.9-3.280zm-4.020.17c0-.06.020-.11.020-.17V5c0-1.660-1.340-3-3-3S9 3.340 9 5v.18l5.980 5.990zM4.270 3L3 4.270l6.010 6.010V11c0 1.660 1.330 3 2.990 3 .22 0 .44-.03.65-.08l1.660 1.660c-.71.33-1.500.52-2.310.52-2.760 0-5.300-2.100-5.300-5.100H5c0 3.410 2.720 6.230 6 6.720V21h2v-3.280c.91-.13 1.770-.45 2.540-.9L19.730 21 21 19.730 4.270 3z" fill="#f1f3f4"/></svg></div><div class="avt" style="background:#0097a7;top:32.8px">I</div><div class="nm">Вы</div></div>


<div class="abs" style="left:18px;top:564.800px;font-size:11.6px;line-height:14px;font-weight:bold;color:#f1f3f4;white-space:nowrap">14:36</div><div class="abs" style="left:56px;top:566.3px;width:1px;height:11.7px;background:#9aa0a6"></div><div class="abs" id="code" style="left:66.2px;top:564.800px;font-size:11.6px;line-height:14px;font-weight:bold;color:#f1f3f4;white-space:nowrap;transform:scaleX(1.078);transform-origin:0 0">qqq-nefp-ugp</div><div class="cbtn" style="left:459.5px;background:#ea4335"></div><svg class="abs" style="left:467.00px;top:564.50px" width="15" height="15" viewBox="0 0 24 24"><path d="M19 11h-1.7c0 .74-.16 1.43-.43 2.050l1.230 1.230c.56-.98.9-2.090.9-3.280zm-4.020.17c0-.06.020-.11.020-.17V5c0-1.660-1.340-3-3-3S9 3.340 9 5v.18l5.980 5.990zM4.270 3L3 4.270l6.010 6.010V11c0 1.660 1.330 3 2.990 3 .22 0 .44-.03.65-.08l1.660 1.660c-.71.33-1.500.52-2.310.52-2.760 0-5.300-2.100-5.300-5.100H5c0 3.410 2.720 6.230 6 6.720V21h2v-3.280c.91-.13 1.770-.45 2.540-.9L19.730 21 21 19.730 4.270 3z" fill="#fff"/></svg><div class="cbtn" style="left:498.75px;background:#6e2b28"></div><svg class="abs" style="left:506.50px;top:564.75px" width="14.5" height="14.5" viewBox="0 0 24 24"><path d="M18 10.480V6c0-1.100-.9-2-2-2H6.830l2 2H16v7.170l2 2v-1.650l4 3.980v-11l-4 3.980zM16 16L6 6 4 4 2.810 2.810 1.390 4.220l.85.850C2.090 5.350 2 5.660 2 6v12c0 1.100.9 2 2 2h12c.34 0 .65-.090.930-.24l2.850 2.850 1.410-1.410L18 18l-2-2zM4 18V6.830L15.170 18H4z" fill="#8f7371"/></svg><div class="abs" style="left:517.1px;top:556.3px;width:15px;height:15px;border-radius:50%;background:#fa7b17;color:#fff;font-size:10.5px;line-height:15px;text-align:center;font-weight:bold">!</div><div class="cbtn" style="left:537.75px"></div><svg class="abs" style="left:543.25px;top:562.80px" width="19" height="19" viewBox="0 0 24 24"><path d="M19 4H5c-1.110 0-2 .9-2 2v12c0 1.100.89 2 2 2h14c1.100 0 2-.9 2-2V6c0-1.100-.9-2-2-2zm0 14H5V6h14v12zM7 15h3c.55 0 1-.45 1-1v-1H9.500v.5h-2v-3h2v.5H11v-1c0-.55-.45-1-1-1H7c-.55 0-1 .45-1 1v4c0 .55.45 1 1 1zm7 0h3c.55 0 1-.45 1-1v-1h-1.500v.5h-2v-3h2v.5H18v-1c0-.55-.45-1-1-1h-3c-.55 0-1 .45-1 1v4c0 .55.45 1 1 1z" stroke="#fff" stroke-width="0.5" fill="#fff"/></svg><div class="cbtn" style="left:576.75px"></div><svg class="abs" style="left:582.50px;top:562.50px" width="18.2" height="18.2" viewBox="0 0 24 24"><path d="M21 7c0-1.380-1.120-2.500-2.500-2.500-.17 0-.34.020-.5.050V4c0-1.380-1.120-2.500-2.500-2.500-.23 0-.46.030-.67.090C14.460.66 13.560 0 12.500 0c-1.230 0-2.250.89-2.460 2.060C9.870 2.020 9.690 2 9.500 2 8.120 2 7 3.120 7 4.500v5.890c-.34-.31-.76-.54-1.220-.66L5.010 9.520c-.83-.23-1.700.09-2.190.83-.38.570-.4 1.310-.15 1.950l2.560 6.430C6.490 21.910 9.570 24 13 24c4.420 0 8-3.580 8-8V7zm-2 9c0 3.310-2.690 6-6 6-2.610 0-4.950-1.590-5.910-4.010l-2.600-6.540 .53.140c.46.120.83.460 1 .9L7 15h2V4.500c0-.28.220-.5.500-.5s.5.220.5.500V12h2V2.500c0-.28.220-.5.500-.5s.5.220.5.500V12h2V4c0-.28.220-.5.500-.5s.5.220.5.500v8h2V7c0-.28.220-.5.500-.5s.5.220.5.500v9z" stroke="#fff" stroke-width="0.3" fill="#fff"/></svg><div class="cbtn" style="left:615.75px"></div><svg class="abs" style="left:620.75px;top:562.20px" width="20" height="20" viewBox="0 0 24 24"><path d="M21 3H3c-1.110 0-2 .89-2 2v14c0 1.110.89 2 2 2h18c1.110 0 2-.89 2-2V5c0-1.110-.89-2-2-2zm0 16.020H3V4.980h18v14.040zM10 12H8l4-4 4 4h-2v4h-4v-4z" stroke="#fff" stroke-width="0.4" fill="#fff"/></svg><div class="cbtn" style="left:654.75px"></div><svg class="abs" style="left:668.15px;top:565.5px" width="3.200" height="13" viewBox="0 0 3.200 13"><circle cx="1.600" cy="1.400" r="1.900" fill="#fff"/><circle cx="1.600" cy="6.500" r="1.900" fill="#fff"/><circle cx="1.600" cy="11.600" r="1.900" fill="#fff"/></svg><div class="abs" style="left:693.75px;top:557px;width:42px;height:30px;border-radius:15px;background:#ea4335"></div><svg class="abs" style="left:705.25px;top:563.80px" width="19" height="19" viewBox="0 0 24 24"><path d="M12 9c-1.600 0-3.150.25-4.600.72v3.100c0 .39-.23.740-.56.900-.98.490-1.870 1.120-2.660 1.850-.18.180-.43.280-.7.280-.28 0-.53-.11-.71-.29L.29 13.080c-.18-.17-.29-.42-.29-.7 0-.28.110-.53.290-.71C3.340 8.780 7.460 7 12 7s8.660 1.780 11.710 4.670c.18.180.29.430.29.710 0 .28-.11.530-.29.710l-2.480 2.480c-.18.180-.43.290-.71.290-.27 0-.52-.11-.7-.28-.79-.74-1.690-1.360-2.670-1.850-.33-.16-.56-.5-.56-.9v-3.100C15.150 9.250 13.600 9 12 9z" fill="#fff"/></svg><svg class="abs" style="left:1014.95px;top:562.25px" width="19.5" height="19.5" viewBox="0 0 24 24"><path d="M11 7h2v2h-2zm0 4h2v6h-2zm1-9C6.480 2 2 6.480 2 12s4.480 10 10 10 10-4.480 10-10S17.520 2 12 2zm0 18c-4.410 0-8-3.590-8-8s3.590-8 8-8 8 3.590 8 8-3.590 8-8 8z" stroke="#fff" stroke-width="0.7" fill="#fff"/></svg><svg class="abs" style="left:1051.25px;top:563.25px" width="18.5" height="18.5" viewBox="0 0 24 24"><path d="M16.670 13.130C18.040 14.060 19 15.320 19 17v3h4v-3c0-2.180-3.570-3.470-6.330-3.870zM15 12c2.210 0 4-1.790 4-4s-1.790-4-4-4c-.47 0-.91.100-1.330.24C14.500 5.270 15 6.580 15 8s-.5 2.730-1.330 3.760c.42.140.86.240 1.330.24zM9 12c2.210 0 4-1.790 4-4s-1.790-4-4-4-4 1.790-4 4 1.790 4 4 4zm0-6c1.100 0 2 .9 2 2s-.9 2-2 2-2-.9-2-2 .9-2 2-2zm0 7c-2.670 0-8 1.340-8 4v3h16v-3c0-2.660-5.330-4-8-4zm6 5H3v-.99C3.200 16.290 6.300 15 9 15s5.800 1.290 6 2v1z" stroke="#fff" stroke-width="0.5" fill="#fff"/></svg><div class="abs" style="left:1061.2px;top:550.5px;width:15px;height:15px;border-radius:50%;background:#5f6368;color:#fff;font-size:8.6px;line-height:15px;text-align:center;font-weight:bold;letter-spacing:-.3px">10</div><svg class="abs" style="left:1086.75px;top:562.85px" width="19.5" height="19.5" viewBox="0 0 24 24"><path d="M4 4h16v12H5.170L4 17.170V4m0-2c-1.100 0-1.990.9-1.990 2L2 22l4-4h14c1.100 0 2-.9 2-2V4c0-1.100-.9-2-2-2H4zm2 10h8v2H6v-2zm0-3h12v2H6V9zm0-3h12v2H6V6z" stroke="#fff" stroke-width="0.6" fill="#fff"/></svg><svg class="abs" style="left:1123.20px;top:562.70px" width="19" height="19" viewBox="0 0 24 24"><path d="M12 2l-5.500 9h11L12 2zm0 3.840L13.930 9h-3.870L12 5.840zM17.500 13c-2.490 0-4.500 2.010-4.500 4.500s2.010 4.500 4.500 4.500 4.500-2.010 4.500-4.500-2.010-4.500-4.500-4.500zm0 7c-1.380 0-2.500-1.120-2.500-2.500s1.120-2.500 2.500-2.500 2.500 1.120 2.500 2.500-1.120 2.500-2.500 2.500zM3 21.500h8v-8H3v8zm2-6h4v4H5v-4z" stroke="#fff" stroke-width="0.6" fill="#fff"/></svg><svg class="abs" style="left:1161.5px;top:563.5px" width="16" height="17" viewBox="0 0 16 17"><path d="M9 15H2.300q-1.200 0-1.200-1.200V7.200Q1.100 6 2.300 6h8.400q1.200 0 1.200 1.200V8" stroke="#fff" stroke-width="1.500" fill="none"/><path d="M3.600 6V4.200a2.900 2.900 0 0 1 5.800 0V6" stroke="#fff" stroke-width="1.500" fill="none"/><circle cx="11.800" cy="12.700" r="3.700" fill="#fff"/><circle cx="11.800" cy="11.500" r="1.100" fill="#202124"/><path d="M9.700 14.600q2.100-1.700 4.200 0-.8 1.100-2.100 1.100t-2.100-1.100z" fill="#202124"/></svg>

<div id="dl"><div class="dli" style="left:0.0px"><svg class="abs" style="left:14.300px;top:15.200px" width="13" height="12.600" viewBox="0 0 13 12.600"><path d="M4.200 0h5.600L13 3v9.600H4.200z" fill="#fff" stroke="#9aa7a4" stroke-width=".5"/><path d="M9.800 0v3H13z" fill="#d5dbd9"/><g stroke="#5a9a70" stroke-width=".55"><path d="M7 4.500h5M7 6.500h5M7 8.500h5M7 10.500h5M8.800 4v7M10.800 4v7"/></g><rect x="0" y="2.800" width="7" height="7" rx=".5" fill="#1d7044"/><path d="M1.900 4.400l3.200 3.800M5.100 4.400L1.900 8.200" stroke="#fff" stroke-width="1.100"/></svg><div class="t">Новая форма (От....xlsx</div><svg class="abs" style="left:155.500px;top:20.600px" width="8.400" height="5.500" viewBox="0 0 8.400 5.500"><path d="M.7 4.900l3.500-3.600 3.500 3.600" stroke="#1e3238" stroke-width="1.400" fill="none"/></svg><i class="sp abs"></i></div><div class="dli" style="left:174.7px"><svg class="abs" style="left:14.300px;top:15.200px" width="13" height="12.600" viewBox="0 0 13 12.600"><path d="M4.200 0h5.600L13 3v9.600H4.200z" fill="#fff" stroke="#9aa7a4" stroke-width=".5"/><path d="M9.800 0v3H13z" fill="#d5dbd9"/><g stroke="#5a9a70" stroke-width=".55"><path d="M7 4.500h5M7 6.500h5M7 8.500h5M7 10.500h5M8.800 4v7M10.800 4v7"/></g><rect x="0" y="2.800" width="7" height="7" rx=".5" fill="#1d7044"/><path d="M1.900 4.400l3.200 3.800M5.100 4.400L1.900 8.200" stroke="#fff" stroke-width="1.100"/></svg><div class="t">Новая форма (От....xlsx</div><svg class="abs" style="left:155.500px;top:20.600px" width="8.400" height="5.500" viewBox="0 0 8.400 5.500"><path d="M.7 4.900l3.500-3.600 3.500 3.600" stroke="#1e3238" stroke-width="1.400" fill="none"/></svg><i class="sp abs"></i></div><div class="dli" style="left:349.4px"><svg class="abs" style="left:14.300px;top:15.200px" width="13" height="12.600" viewBox="0 0 13 12.600"><path d="M4.200 0h5.600L13 3v9.600H4.200z" fill="#fff" stroke="#9aa7a4" stroke-width=".5"/><path d="M9.800 0v3H13z" fill="#d5dbd9"/><g stroke="#5a9a70" stroke-width=".55"><path d="M7 4.500h5M7 6.500h5M7 8.500h5M7 10.500h5M8.800 4v7M10.800 4v7"/></g><rect x="0" y="2.800" width="7" height="7" rx=".5" fill="#1d7044"/><path d="M1.900 4.400l3.200 3.800M5.100 4.400L1.900 8.200" stroke="#fff" stroke-width="1.100"/></svg><div class="t">Новая форма (От....xlsx</div><svg class="abs" style="left:155.500px;top:20.600px" width="8.400" height="5.500" viewBox="0 0 8.400 5.500"><path d="M.7 4.900l3.500-3.600 3.500 3.600" stroke="#1e3238" stroke-width="1.400" fill="none"/></svg><i class="sp abs"></i></div><div class="abs" style="left:1093.700px;top:10.200px;width:78.800px;height:22.800px;border:1px solid #a9d6db;border-radius:4px"></div>
<div class="abs" id="showall" style="left:1105.500px;top:15.300px;font-size:9.800px;line-height:13px;color:#2a66c4;white-space:nowrap;transform:scaleX(.9);transform-origin:0 0">Показать все</div>
<svg class="abs" style="left:1182.300px;top:18.200px" width="7.400" height="7.400" viewBox="0 0 7.400 7.400"><path d="M.6.6l6.200 6.200M6.800.6L.6 6.800" stroke="#1a2a2e" stroke-width="1.350" fill="none"/></svg>
</div>

<div id="task"><svg class="abs" style="left:6.200px;top:1.200px" width="28" height="28" viewBox="0 0 28 28"><defs>
<radialGradient id="orb" cx=".5" cy=".85" r=".9"><stop offset="0" stop-color="#55d2f6"/><stop offset=".3" stop-color="#1f82c4"/><stop offset=".65" stop-color="#1a4f8c"/><stop offset="1" stop-color="#2b5d94"/></radialGradient>
<linearGradient id="orbh" x1="0" y1="0" x2="0" y2="1"><stop offset="0" stop-color="#fff" stop-opacity=".55"/><stop offset="1" stop-color="#fff" stop-opacity=".05"/></linearGradient></defs>
<circle cx="14" cy="14" r="13.600" fill="url(#orb)" stroke="#9cc4e4" stroke-opacity=".7" stroke-width=".8"/>
<path d="M2 12a12 12 0 0 1 24 0q-12 4.500-24 0z" fill="url(#orbh)"/>
<path d="M7.600 7.600q3-1.600 5.400.2l-1.300 5.200q-2.400-1.700-5.400-.1z" fill="#e9602c"/>
<path d="M14.300 8.200q2.600 1.500 5.600-.1l-1.300 5.300q-3 1.500-5.600 0z" fill="#86bc40"/>
<path d="M5.900 14.200q3-1.600 5.400.1l-1.300 5.300q-2.400-1.800-5.400-.2z" fill="#3fa0e0"/>
<path d="M12.600 14.800q2.600 1.500 5.600-.1l-1.300 5.300q-3 1.600-5.600.1z" fill="#f6c02c"/></svg><svg class="abs" style="left:54.80px;top:3.10px" width="24.2" height="24.2" viewBox="-12 -12 24 24">
<circle r="12" fill="#fbbc05"/>
<path d="M0 0L-10.390 -6A12 12 0 0 1 10.390 -6z" fill="#ea4335"/>
<path d="M0 0L-10.390 -6A12 12 0 0 0 0 12L5.200 3z" fill="#34a853"/>
<path d="M0 0L10.390 -6H0z" fill="#ea4335"/>
<path d="M-10.390 -6A12 12 0 0 0 0 12L5.200 3 0 0z" fill="#34a853"/>
<path d="M10.390 -6A12 12 0 0 1 0 12L5.200 3A6 6 0 0 0 5.200 -3L0 -6z" fill="#fbbc05"/>
<circle r="5.600" fill="#fff"/><circle r="4.400" fill="#4285f4"/></svg><svg class="abs" style="left:101.00px;top:3.10px" width="24.2" height="24.2" viewBox="-12 -12 24 24">
<circle r="12" fill="#fbbc05"/>
<path d="M0 0L-10.390 -6A12 12 0 0 1 10.390 -6z" fill="#ea4335"/>
<path d="M0 0L-10.390 -6A12 12 0 0 0 0 12L5.200 3z" fill="#34a853"/>
<path d="M0 0L10.390 -6H0z" fill="#ea4335"/>
<path d="M-10.390 -6A12 12 0 0 0 0 12L5.200 3 0 0z" fill="#34a853"/>
<path d="M10.390 -6A12 12 0 0 1 0 12L5.200 3A6 6 0 0 0 5.200 -3L0 -6z" fill="#fbbc05"/>
<circle r="5.600" fill="#fff"/><circle r="4.400" fill="#4285f4"/></svg><div class="abs" style="left:113.800px;top:15.600px;width:11.200px;height:11.200px;border-radius:50%;background:#f4b4d4"></div><div class="abs" style="left:115.400px;top:19.800px;width:3.400px;height:2.800px;border-radius:1.400px;background:#4a4a4a"></div><div class="abs" style="left:120px;top:19.800px;width:3.400px;height:2.800px;border-radius:1.400px;background:#4a4a4a"></div><div class="tbtn" style="left:138px;width:43.300px"></div><div class="tbtn" style="left:184.500px;width:43.500px;background:linear-gradient(180deg,rgba(255,255,255,.62),rgba(255,255,255,.38) 48%,rgba(255,255,255,.22) 52%,rgba(255,255,255,.34))"></div><div class="tbtn" style="left:231.300px;width:43.200px"></div><div class="tbtn" style="left:283.500px;width:37.500px"></div><div class="tbtn" style="left:280.500px;width:37.500px"></div><div class="tbtn" style="left:277.500px;width:38px;background:linear-gradient(180deg,rgba(160,175,205,1),rgba(120,138,175,1) 48%,rgba(95,112,150,1) 52%,rgba(110,128,168,1))"></div><div class="tbtn" style="left:324.500px;width:43px"></div><svg class="abs" style="left:147.500px;top:3.500px" width="24" height="24" viewBox="0 0 24 24"><path d="M1 4.500h7l1.500 2H23v15H1z" fill="#e8c860"/><path d="M2.500 3h2v1.500h-2zM8 3h2v1.500H8zM13.500 3.800h2v1.500h-2z" fill="#4caf50"/><path d="M5 3h2v1.500H5z" fill="#e04040"/><path d="M1 8h22v14H1z" fill="#f4dc84"/><path d="M4 12.500h16v9.500H4z" fill="#3c9ee0"/><path d="M6.500 15h11v7h-11z" fill="#a8dcf8"/><path d="M3 19.500h18v2.500H3z" fill="#60b8f0"/></svg><svg class="abs" style="left:194.20px;top:3.60px" width="22" height="22" viewBox="-12 -12 24 24">
<circle r="12" fill="#fbbc05"/>
<path d="M0 0L-10.390 -6A12 12 0 0 1 10.390 -6z" fill="#ea4335"/>
<path d="M0 0L-10.390 -6A12 12 0 0 0 0 12L5.200 3z" fill="#34a853"/>
<path d="M0 0L10.390 -6H0z" fill="#ea4335"/>
<path d="M-10.390 -6A12 12 0 0 0 0 12L5.200 3 0 0z" fill="#34a853"/>
<path d="M10.390 -6A12 12 0 0 1 0 12L5.200 3A6 6 0 0 0 5.200 -3L0 -6z" fill="#fbbc05"/>
<circle r="5.600" fill="#fff"/><circle r="4.400" fill="#4285f4"/></svg><div class="abs" style="left:207.800px;top:16.400px;width:10.800px;height:10.800px;border-radius:50%;background:#2b6a1c;color:#dfeeda;font-size:6.500px;line-height:10.800px;text-align:center;font-weight:bold">I</div><svg class="abs" style="left:241px;top:3.300px" width="24" height="24" viewBox="0 0 24 24"><rect x="9" y="3.500" width="14" height="17" fill="#fff"/><rect x="9" y="3.500" width="14" height="17" fill="none" stroke="#d04424" stroke-width="1"/><circle cx="17.500" cy="9" r="3.300" fill="#d04424"/><path d="M17.500 9V5.700A3.300 3.300 0 0 1 20.800 9z" fill="#f0a090"/><rect x="14" y="14" width="7" height="1.400" fill="#d04424"/><rect x="14" y="16.800" width="7" height="1.400" fill="#d04424"/><path d="M0 2.500L14 0v24L0 21.500z" fill="#d04424"/><path d="M4.200 7h3.600q2.800.2 2.800 2.900T7.600 13H6v4H4.200zM6 8.600v2.800h1.500q1.300-.1 1.300-1.400T7.500 8.600z" fill="#fff"/></svg><svg class="abs" style="left:285px;top:3.300px" width="24" height="24" viewBox="0 0 24 24"><rect x="9" y="3.500" width="14" height="17" fill="#fff" stroke="#1d7044" stroke-width="1"/><g stroke="#1d7044" stroke-width="1.200"><path d="M14 6.500h7.500M14 9.500h7.500M14 12.500h7.500M14 15.500h7.500M14 18.200h7.500M17.500 5v14.500"/></g><path d="M0 2.500L14 0v24L0 21.500z" fill="#1d7044"/><path d="M3.600 7h2.100l1.500 3.300L8.800 7h2l-2.500 5 2.600 5H8.800l-1.700-3.500L5.500 17h-2l2.600-5z" fill="#fff"/></svg><svg class="abs" style="left:333px;top:2.500px" width="26" height="26" viewBox="0 0 26 26"><path d="M2 14.500q0-6 6-8.500t10 .5q3.500 3 1 7-1.500 2.200-4 1.500-2.500-.6-3 1.500-.3 2 1.500 3 1.500 1.500-1 2.500-5 1-8-1.500T2 14.500z" fill="#e4e8f0" stroke="#8a92a8" stroke-width=".6"/><circle cx="6.500" cy="11" r="1.600" fill="#e04838"/><circle cx="10.500" cy="8.500" r="1.600" fill="#58b048"/><circle cx="15" cy="8.800" r="1.600" fill="#f0c030"/><circle cx="6.500" cy="16" r="1.600" fill="#3c78d8"/><path d="M22.500 1.500l2 1.500-8.500 15.500-2.500 2 .5-3.200z" fill="#e8943c"/><path d="M22.500 1.500l2 1.500-2.200 4-2-1.400z" fill="#f6d8a8"/></svg><div class="abs" style="left:958.500px;top:7.500px;font-size:9.600px;line-height:12px;color:#fff;white-space:nowrap;transform:scaleX(.92);transform-origin:0 0">RU</div><div class="abs" style="left:975px;top:7.600px;width:12.200px;height:12.200px;border-radius:50%;background:radial-gradient(circle at 40% 35%,#4a6ae8,#1a2cb8 60%,#0c1890);border:1px solid #c8d0f0;color:#fff;font-size:8.500px;line-height:10.400px;text-align:center;font-weight:bold">?</div><svg class="abs" style="left:993.500px;top:5.500px" width="8" height="12" viewBox="0 0 8 12"><rect x="2.500" y=".5" width="4.500" height="3" fill="none" stroke="#fff" stroke-width=".9"/><rect x=".5" y="2" width="4.500" height="3" fill="#445" stroke="#fff" stroke-width=".9"/><path d="M2.200 8.500h4L4.200 10.800z" fill="#fff"/></svg><div class="abs" style="left:1024.300px;top:9.500px;width:12.500px;height:13px;background:#f4f4f4;border-radius:1.500px"></div><svg class="abs" style="left:1025.800px;top:12px" width="9.500" height="8.500" viewBox="0 0 9.500 8.500"><path d="M4.750 1.200L8.500 7.600H1z" fill="none" stroke="#8a8f94" stroke-width="1.700" stroke-linejoin="round"/></svg><div class="abs" style="left:1042px;top:10px;width:12px;height:12px;border-radius:3px;background:#0f9aa4"></div><div class="abs" style="left:1043.800px;top:11.800px;width:8.400px;height:8.400px;border-radius:50%;background:#fff;color:#0f8a94;font-size:8.500px;line-height:7.800px;text-align:center;font-weight:bold">e</div><div class="abs" style="left:1059.800px;top:9.800px;width:12.600px;height:12.600px;background:#ef3a2c"></div><svg class="abs" style="left:1061.500px;top:13px" width="9" height="6.400" viewBox="0 0 9 6.400"><path d="M3.200 0L6.400 3.200 3.200 6.400 0 3.200z" fill="#fff"/><path d="M6.200 .6L8.800 3.200 6.200 5.800" stroke="#fff" stroke-width="1.100" fill="none"/></svg><svg class="abs" style="left:1078px;top:9.500px" width="13" height="13" viewBox="0 0 13 13"><rect x=".6" y=".8" width="5" height="4.200" fill="#dfe6f4" stroke="#fff" stroke-width=".9"/><rect x="4.200" y="4" width="8" height="6.200" fill="#2a3050" stroke="#fff" stroke-width="1"/><path d="M2.500 5v6.200h6" stroke="#fff" stroke-width="1" fill="none"/></svg><svg class="abs" style="left:1096.500px;top:9.300px" width="12" height="13" viewBox="0 0 12 13"><path d="M1.200 .5v12" stroke="#fff" stroke-width="1.300"/><path d="M2 1.500q2.500-1.200 4.500 0t4.500 0v5q-2.500 1.200-4.500 0T2 6.500z" fill="#fff"/></svg><svg class="abs" style="left:1114px;top:9.800px" width="13" height="12" viewBox="0 0 13 12"><path d="M.5 4h2.300L6 1v10L2.800 8H.5z" fill="#fff"/><path d="M7.800 3.500q1.600 2.500 0 5M9.800 2q2.600 4 0 8" stroke="#e8eaf4" stroke-width=".9" fill="none"/></svg><div class="abs" style="left:1140px;top:3.600px;width:40px;text-align:center;font-size:9.900px;line-height:12px;color:#fff;letter-spacing:-.35px;transform:scaleX(.88)">14:36</div><div class="abs" style="left:1135px;top:16.300px;width:50px;text-align:center;font-size:9.900px;line-height:12px;color:#fff;letter-spacing:-.4px;transform:scaleX(.885)">23.12.2022</div><div class="abs" style="left:1190px;top:0;width:10px;height:30.200px;border-left:1px solid rgba(20,25,50,.8);background:linear-gradient(90deg,rgba(255,255,255,.35),rgba(255,255,255,.12))"></div></div>

</body>
</html>
